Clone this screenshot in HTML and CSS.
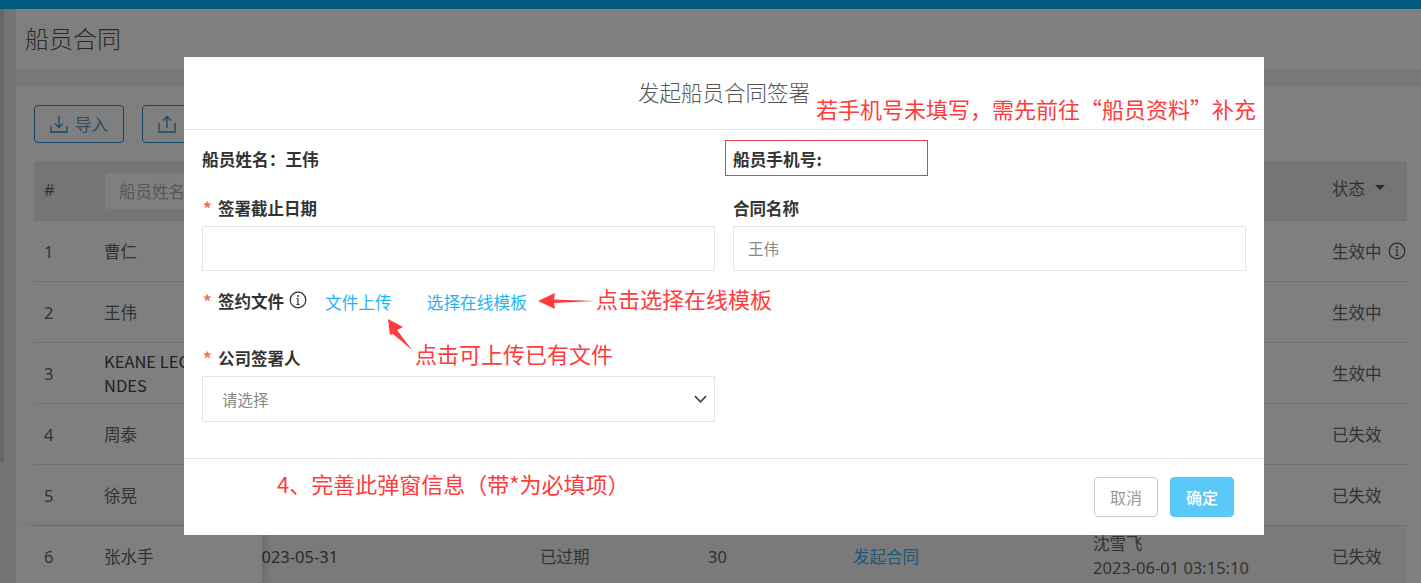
FILE: index.html
```html
<!DOCTYPE html>
<html lang="zh-CN">
<head>
<meta charset="utf-8">
<title>船员合同</title>
<link rel="stylesheet" href="styles.css">
</head>
<body>
<div class="topbar"></div>
<div class="layout">
  <aside class="rail"><div class="rail-thumb"></div></aside>
  <main class="main">
    <header class="page-title">船员合同</header>
    <section class="card">
      <div class="toolbar">
        <button class="tool-btn">
          <svg class="tool-icon" viewBox="1 1 18 18"><path d="M2 12v6h16v-6M10 2v11M6 9.500l4 4 4-4"/></svg>导入
        </button>
        <button class="tool-btn">
          <svg class="tool-icon" viewBox="1 1 18 18"><path d="M2 9v9h16V9M10 14V3M6 6.500l4-4 4 4"/></svg>导出
        </button>
      </div>
      <div class="table">
        <div class="row head">
          <div class="fixed"><span class="c-num">#</span><span class="c-name"><span class="filter">船员姓名</span></span></div>
          <span class="c-date"></span><span class="c-sign"></span><span class="c-days"></span><span class="c-act"></span><span class="c-who"></span>
          <span class="c-status">状态<i class="caret"></i></span>
        </div>
        <div class="row"><div class="fixed"><span class="c-num">1</span><span class="c-name">曹仁</span></div><span class="c-date"></span><span class="c-sign"></span><span class="c-days"></span><span class="c-act"></span><span class="c-who"></span><span class="c-status">生效中<svg class="info" viewBox="0 0 18 18"><circle cx="9" cy="9" r="7.800"/><path d="M9 7.500v6M7.500 13.500h3M7.500 7.500H9"/><circle class="dot" cx="9" cy="5" r="1"/></svg></span></div>
        <div class="row"><div class="fixed"><span class="c-num">2</span><span class="c-name">王伟</span></div><span class="c-date"></span><span class="c-sign"></span><span class="c-days"></span><span class="c-act"></span><span class="c-who"></span><span class="c-status">生效中</span></div>
        <div class="row"><div class="fixed"><span class="c-num">3</span><span class="c-name"><span class="wrap-name">KEANE LEONDES</span></span></div><span class="c-date"></span><span class="c-sign"></span><span class="c-days"></span><span class="c-act"></span><span class="c-who"></span><span class="c-status">生效中</span></div>
        <div class="row"><div class="fixed"><span class="c-num">4</span><span class="c-name">周泰</span></div><span class="c-date"></span><span class="c-sign"></span><span class="c-days"></span><span class="c-act"></span><span class="c-who"></span><span class="c-status">已失效</span></div>
        <div class="row"><div class="fixed"><span class="c-num">5</span><span class="c-name">徐晃</span></div><span class="c-date"></span><span class="c-sign"></span><span class="c-days"></span><span class="c-act"></span><span class="c-who"></span><span class="c-status">已失效</span></div>
        <div class="row hover"><div class="fixed"><span class="c-num">6</span><span class="c-name">张水手</span></div><span class="c-date">2023-05-31</span><span class="c-sign">已过期</span><span class="c-days">30</span><span class="c-act link">发起合同</span><span class="c-who">沈雪飞<br>2023-06-01 03:15:10</span><span class="c-status">已失效</span></div>
      </div>
    </section>
  </main>
</div>

<div class="overlay">
  <div class="modal">
    <div class="modal-head">发起船员合同签署</div>
    <div class="modal-body">
      <div class="form-grid">
        <div class="field-static strong">船员姓名：王伟</div>
        <div class="field-static strong">船员手机号:</div>
        <div class="field">
          <label class="label"><span class="req">*</span>签署截止日期</label>
          <div class="input"></div>
        </div>
        <div class="field">
          <label class="label">合同名称</label>
          <div class="input placeholder">王伟</div>
        </div>
        <div class="field-files">
          <span class="label files-label"><span class="req">*</span>签约文件<svg class="info label-info" viewBox="0 0 18 18"><circle cx="9" cy="9" r="7.800"/><path d="M9 7.500v6M7.500 13.500h3M7.500 7.500H9"/><circle class="dot" cx="9" cy="5" r="1"/></svg></span>
          <a class="file-link file-first">文件上传</a>
          <a class="file-link">选择在线模板</a>
        </div>
        <div class="field field-signer">
          <label class="label"><span class="req">*</span>公司签署人</label>
          <div class="input select"><span>请选择</span>
            <svg class="chevron" viewBox="0 0 14 8"><path d="M1 1l6 6 6-6"/></svg>
          </div>
        </div>
      </div>
    </div>
    <div class="modal-foot">
      <button class="btn btn-cancel">取消</button>
      <button class="btn btn-ok">确定</button>
    </div>

    <div class="mark-box"></div>
    <div class="note note-phone">若手机号未填写，需先前往“船员资料”补充</div>
    <div class="note note-template">点击选择在线模板</div>
    <div class="note note-upload">点击可上传已有文件</div>
    <div class="note note-step">4、完善此弹窗信息（带*为必填项）</div>
    <svg class="arrows" viewBox="0 0 1080 478">
      <polygon points="354,244 371,236 370,242.500 411,244 370,246 371,252"/>
      <polygon points="204,262 219,270 213,273 228,293 209,277 206,278"/>
    </svg>
  </div>
</div>
</body>
</html>
```

FILE: styles.css
```css
* { box-sizing: border-box; }
html, body { margin: 0; height: 583px; overflow: hidden; }
body {
  background: #eef0f3;
  font-family: "Noto Sans CJK SC", "Noto Sans", sans-serif;
  font-size: 16.5px;
  color: #666;
}
.topbar { height: 9px; background: #00b5ff; }
.layout { display: flex; height: 574px; }
.rail { width: 16px; flex: none; background: #e6e8eb; }
.rail-thumb { width: 4px; height: 454px; background: #cfcfcf; border-radius: 0 0 3px 0; }
.main { flex: 1; min-width: 0; }
.page-title {
  height: 60px; background: #fff; padding-left: 9px;
  font-size: 24px; font-weight: 300; line-height: 57px; color: #555;
}
.card { margin-top: 18px; background: #fff; padding: 18px 14px 0 18px; height: 496px; }
.toolbar { display: flex; gap: 18px; margin-bottom: 18px; }
.tool-btn {
  display: flex; align-items: center; justify-content: center; gap: 7px;
  width: 90px; height: 38px; padding: 0;
  background: transparent; border: 1px solid #2a8fd0; border-radius: 4px;
  color: #5a9cc4; font: inherit;
}
.tool-btn { color: #5a9cc4; }
.tool-icon { width: 18px; height: 18px; fill: none; stroke: #2a8fd0; stroke-width: 1.300; }
.row { display: flex; height: 61px; align-items: center; border-top: 1px solid #e0e0e0; }
.row.head { height: 59px; background: #ebebeb; border-top: 0; }
.row.hover { background: #f5f5f5; }
.fixed { display: flex; align-items: center; width: 228px; height: 100%; flex: none; margin-right: -10px; }
.hover .fixed { background: #fff; margin-left: -18px; padding-left: 18px; width: 246px; box-shadow: 4px 0 8px rgba(0,0,0,.12); position: relative; }
.c-num { width: 60px; padding-left: 10px; flex: none; font-family: "Noto Sans", "Noto Sans CJK SC", sans-serif; }
.head .c-num { margin-bottom: 2px; }
.c-name { width: 168px; padding-left: 10px; flex: none; line-height: 24px; }
.wrap-name { display: block; width: 88px; word-break: break-all; color: #444; }
.filter {
  display: block; width: 150px; height: 36px; margin-left: 1px; padding-left: 14px;
  background: #fff; border-radius: 4px; line-height: 36px; color: #b4b0aa;
}
.c-date { width: 288px; flex: none; color: #555; font-family: "Noto Sans", "Noto Sans CJK SC", sans-serif; }
.c-sign { width: 168px; flex: none; }
.c-days { width: 145px; flex: none; font-family: "Noto Sans", "Noto Sans CJK SC", sans-serif; }
.c-act { width: 240px; flex: none; }
.link { color: #3fb0ee; }
.c-who { width: 239px; flex: none; line-height: 24px; font-family: "Noto Sans", "Noto Sans CJK SC", sans-serif; }
.c-status { display: flex; align-items: center; }
.head .c-status { margin-bottom: 6px; }
.caret {
  width: 0; height: 0; margin-left: 10px;
  border: 5px solid transparent; border-top-color: #555; border-bottom: 0;
}
.info { width: 18px; height: 18px; margin-left: 6px; fill: none; stroke: #555; stroke-width: 1.200; flex: none; }
.info .dot { fill: #555; stroke: none; }

.overlay { position: fixed; inset: 0; background: rgba(0,0,0,.5); }
.modal {
  position: relative; display: flex; flex-direction: column;
  width: 1080px; height: 478px; margin: 57px 0 0 184px;
  background: #fff; color: #333;
}
.modal-head {
  height: 73px; flex: none; border-bottom: 1px solid #e5e5e5;
  text-align: center; font-size: 21.500px; font-weight: 300; line-height: 69px; color: #555;
}
.modal-body { flex: 1; padding: 0 18px; }
.form-grid { display: grid; grid-template-columns: 513px 513px; column-gap: 18px; }
.field-static { height: 61px; line-height: 59px; font-size: 16.700px; }
.strong, .label { font-weight: 700; color: #333; }
.field { display: flex; flex-direction: column; }
.label { display: flex; align-items: center; height: 34px; line-height: 34px; }
.files-label { margin-bottom: 2px; }
.req { width: 16px; padding-left: 1px; color: #f0704f; font-weight: 700; font-size: 17px; }
.input {
  height: 45px; margin-top: 1px; border: 1px solid #e5e5e5; padding-left: 15px;
  line-height: 43px; font-size: 15.500px;
}
.placeholder { color: #888; padding-left: 14px; }
.field-files { grid-column: 1 / -1; display: flex; align-items: center; gap: 35px; height: 62px; }
.file-link { color: #1fb4f5; font-size: 16.700px; }
.file-first { margin-left: -17px; }
.label-info { margin-left: 5px; margin-top: -2px; stroke: #333; }
.label-info .dot { fill: #333; }
.field-signer { grid-column: 1; margin-top: 8px; }
.select {
  display: flex; align-items: center; justify-content: space-between;
  height: 46px; padding: 0 7px 0 19px; color: #888;
}
.chevron { width: 13px; height: 8px; fill: none; stroke: #444; stroke-width: 1.800; }
.modal-foot {
  height: 77px; flex: none; border-top: 1px solid #e5e5e5;
  display: flex; justify-content: flex-end; align-items: flex-start; gap: 12px;
  padding: 18px 30px 0 0;
}
.btn { width: 64px; height: 40px; padding: 0; border-radius: 4px; font: inherit; font-size: 16px; }
.btn-cancel { background: #fff; border: 1px solid #ccc; color: #999; }
.btn-ok { background: #5bc8fa; border: 1px solid #5bc8fa; color: #fff; font-weight: 500; }

.mark-box { position: absolute; left: 541px; top: 83px; width: 203px; height: 36px; border: 1px solid #e0403f; }
.note { position: absolute; color: #ff3b3b; font-size: 22px; line-height: 30px; white-space: nowrap; }
.note-phone { left: 632px; top: 36px; }
.note-template { left: 412px; top: 226px; }
.note-upload { left: 231px; top: 281px; }
.note-step { left: 93px; top: 411px; }
.arrows { position: absolute; left: 0; top: 0; width: 1080px; height: 478px; pointer-events: none; }
.arrows polygon { fill: #ff3b3b; }
```
